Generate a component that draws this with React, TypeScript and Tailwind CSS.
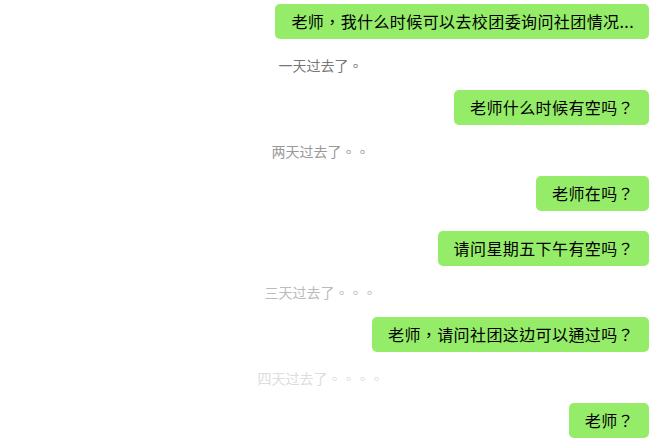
import React from "react";

type Item =
  | { kind: "me"; text: string }
  | { kind: "time"; text: string; color: string };

const items: Item[] = [
  { kind: "me", text: "老师，我什么时候可以去校团委询问社团情况..." },
  { kind: "time", text: "一天过去了。", color: "text-[#777777]" },
  { kind: "me", text: "老师什么时候有空吗？" },
  { kind: "time", text: "两天过去了。。", color: "text-[#999999]" },
  { kind: "me", text: "老师在吗？" },
  { kind: "me", text: "请问星期五下午有空吗？" },
  { kind: "time", text: "三天过去了。。。", color: "text-[#bbbbbb]" },
  { kind: "me", text: "老师，请问社团这边可以通过吗？" },
  { kind: "time", text: "四天过去了。。。。", color: "text-[#dddddd]" },
  { kind: "me", text: "老师？" },
];

export default function App() {
  return (
    <div
      className="w-[656px] h-[442px] bg-white overflow-hidden pt-[4px] [text-spacing-trim:space-all]"
      style={{ fontFamily: '"Noto Sans CJK TC", "Noto Sans CJK SC", sans-serif' }}
    >
      <div className="flex flex-col">
        {items.map((it, i) => {
          if (it.kind === "time") {
            return (
              <div
                key={i}
                className={`h-[51px] flex items-center justify-center pr-[15px] text-[14px] leading-[20px] ${it.color}`}
              >
                {it.text}
              </div>
            );
          }
          const prev = items[i - 1];
          const mt = prev && prev.kind === "me" ? "mt-5" : "";
          return (
            <div key={i} className={`flex justify-end pr-[7px] ${mt}`}>
              <div className="h-[35px] flex items-center pl-4 pr-[15px] rounded-[5px] bg-[#95ec69] text-black text-[16px] leading-[21px] tracking-[0.4px] whitespace-nowrap">
                {it.text}
              </div>
            </div>
          );
        })}
      </div>
    </div>
  );
}
